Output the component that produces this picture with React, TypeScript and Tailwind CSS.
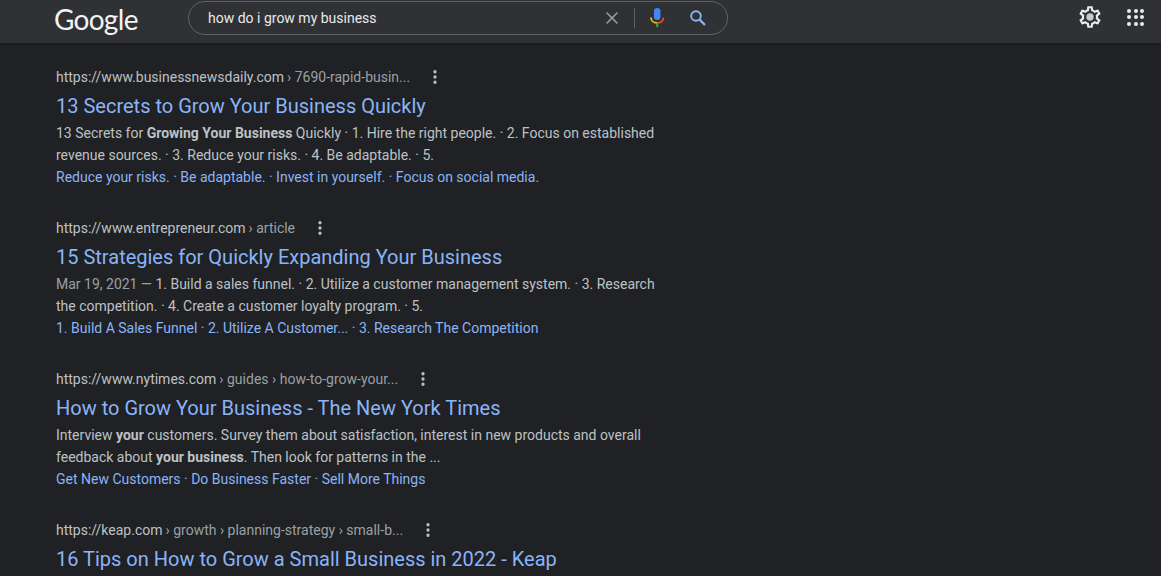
import { X, MoreVertical } from 'lucide-react';

interface Result {
  site: string;
  path: string;
  title: string;
  lines: React.ReactNode[];
  links?: string;
}

const results: Result[] = [
  {
    site: 'https://www.businessnewsdaily.com',
    path: ' › 7690-rapid-busin...',
    title: '13 Secrets to Grow Your Business Quickly',
    lines: [
      <>13 Secrets for <b className="font-bold">Growing Your Business</b> Quickly · 1. Hire the right people. · 2. Focus on established</>,
      <>revenue sources. · 3. Reduce your risks. · 4. Be adaptable. · 5.</>,
    ],
    links: 'Reduce your risks. · Be adaptable. · Invest in yourself. · Focus on social media.',
  },
  {
    site: 'https://www.entrepreneur.com',
    path: ' › article',
    title: '15 Strategies for Quickly Expanding Your Business',
    lines: [
      <><span className="text-[#9aa0a6]">Mar 19, 2021 — </span>1. Build a sales funnel. · 2. Utilize a customer management system. · 3. Research</>,
      <>the competition. · 4. Create a customer loyalty program. · 5.</>,
    ],
    links: '1. Build A Sales Funnel · 2. Utilize A Customer... · 3. Research The Competition',
  },
  {
    site: 'https://www.nytimes.com',
    path: ' › guides › how-to-grow-your...',
    title: 'How to Grow Your Business - The New York Times',
    lines: [
      <>Interview <b className="font-bold">your</b> customers. Survey them about satisfaction, interest in new products and overall</>,
      <>feedback about <b className="font-bold">your business</b>. Then look for patterns in the ...</>,
    ],
    links: 'Get New Customers · Do Business Faster · Sell More Things',
  },
  {
    site: 'https://keap.com',
    path: ' › growth › planning-strategy › small-b...',
    title: '16 Tips on How to Grow a Small Business in 2022 - Keap',
    lines: [],
  },
];

function MicIcon() {
  return (
    <svg width="18" height="22" viewBox="0 0 18 22" fill="none">
      <rect x="6" y="1" width="6.4" height="12" rx="3.2" fill="#4285f4" />
      <path d="M3 10.5c0 3.2 2.6 5.5 6 5.5" stroke="#fbbc04" strokeWidth="1.8" />
      <path d="M15.5 10.5c0 3.2-2.8 5.5-6.3 5.5" stroke="#ea4335" strokeWidth="1.8" />
      <rect x="8.2" y="16" width="2" height="4" fill="#34a853" />
    </svg>
  );
}

function SearchIcon() {
  return (
    <svg width="20" height="20" viewBox="0 0 20 20" fill="none" stroke="#8ab4f8">
      <circle cx="8" cy="8" r="4.8" strokeWidth="1.9" />
      <path d="M11.6 11.6 17 17" strokeWidth="2.2" />
    </svg>
  );
}

function GearIcon() {
  return (
    <svg width="26" height="26" viewBox="0 0 24 24" fill="#e8eaed">
      <path d="M19.43 12.98c.04-.32.07-.64.07-.98s-.03-.66-.07-.98l2.11-1.65c.19-.15.24-.42.12-.64l-2-3.46c-.12-.22-.39-.3-.61-.22l-2.49 1c-.52-.4-1.08-.73-1.69-.98l-.38-2.65C14.46 2.18 14.25 2 14 2h-4c-.25 0-.46.18-.49.42l-.38 2.65c-.61.25-1.17.59-1.69.98l-2.49-1c-.23-.09-.49 0-.61.22l-2 3.46c-.13.22-.07.49.12.64l2.11 1.65c-.04.32-.07.65-.07.98s.03.66.07.98l-2.11 1.65c-.19.15-.24.42-.12.64l2 3.46c.12.22.39.3.61.22l2.49-1c.52.4 1.08.73 1.69.98l.38 2.65c.03.24.24.42.49.42h4c.25 0 .46-.18.49-.42l.38-2.65c.61-.25 1.17-.59 1.69-.98l2.49 1c.23.09.49 0 .61-.22l2-3.46c.12-.22.07-.49-.12-.64l-2.11-1.65zM17.45 11.27c.04.31.05.52.05.73 0 .21-.02.43-.05.73l-.14 1.13.89.7 1.08.84-.7 1.21-1.27-.51-1.04-.42-.9.68c-.43.32-.84.56-1.25.73l-1.06.43-.16 1.13-.2 1.35h-1.4l-.19-1.35-.16-1.13-1.06-.43c-.43-.18-.83-.41-1.23-.71l-.91-.7-1.06.43-1.27.51-.7-1.21 1.08-.84.89-.7-.14-1.13c-.03-.31-.05-.54-.05-.74s.02-.43.05-.73l.14-1.13-.89-.7-1.08-.84.7-1.21 1.27.51 1.04.42.9-.68c.43-.32.84-.56 1.25-.73l1.06-.43.16-1.13.2-1.35h1.39l.19 1.35.16 1.13 1.06.43c.43.18.83.41 1.23.71l.91.7 1.06-.43 1.27-.51.7 1.21-1.07.85-.89.7.14 1.13z" />
      <circle cx="12" cy="12" r="3.4" fill="#c4c7cc" />
    </svg>
  );
}

function AppsIcon() {
  return (
    <div className="grid grid-cols-3 gap-[2.500px]">
      {Array.from({ length: 9 }).map((_, i) => (
        <span key={i} className="h-1 w-1 rounded-full bg-[#e8eaed]" />
      ))}
    </div>
  );
}

function ResultItem({ result }: { result: Result }) {
  return (
    <div className="h-[151px]">
      <div className="flex h-[22px] items-center text-[14px] text-[#bdc1c6]">
        <span>{result.site}</span>
        <span className="ml-[3px] text-[#9aa0a6]">{result.path}</span>
        <MoreVertical className="ml-4 h-[18px] w-[18px] text-[#bdc1c6]" strokeWidth={2.4} />
      </div>
      <div className="mt-[5px] h-[29px] text-[20px] leading-[26px] text-[#8ab4f8]">{result.title}</div>
      <div className="text-[14px] leading-[22px] text-[#bdc1c6]">
        {result.lines.map((line, i) => (
          <div key={i} className="whitespace-nowrap">{line}</div>
        ))}
        {result.links && <div className="whitespace-nowrap text-[#8ab4f8]">{result.links}</div>}
      </div>
    </div>
  );
}

export default function App() {
  return (
    <div className="h-[576px] overflow-hidden bg-[#202124] font-['Roboto',sans-serif]">
      <header className="flex h-[43px] items-start bg-[#303134] shadow-[0_1px_2px_rgba(0,0,0,0.3)]">
        <div className="ml-[54px] w-[134px] pt-[2px] font-['Lato',sans-serif] text-[28px] leading-[34px] tracking-[-0.700px] text-[#f1f3f4]">
          Google
        </div>
        <div className="mt-px flex h-[34px] w-[540px] items-center rounded-full border border-[#5f6368] pl-[19px] text-[14px] text-[#e8eaed]">
          <span className="flex-1">how do i grow my business</span>
          <X className="h-5 w-5 text-[#9aa0a6]" strokeWidth={1.800} />
          <span className="ml-3 h-5 w-px bg-[#5f6368]" />
          <span className="ml-[13px]"><MicIcon /></span>
          <span className="ml-[22px] mr-[19px]"><SearchIcon /></span>
        </div>
        <div className="ml-auto mr-[17px] mt-1 flex items-center gap-[24px]">
          <GearIcon />
          <AppsIcon />
        </div>
      </header>
      <main className="pl-[56px] pt-[23px]">
        {results.map((r) => (
          <ResultItem key={r.site} result={r} />
        ))}
      </main>
    </div>
  );
}
